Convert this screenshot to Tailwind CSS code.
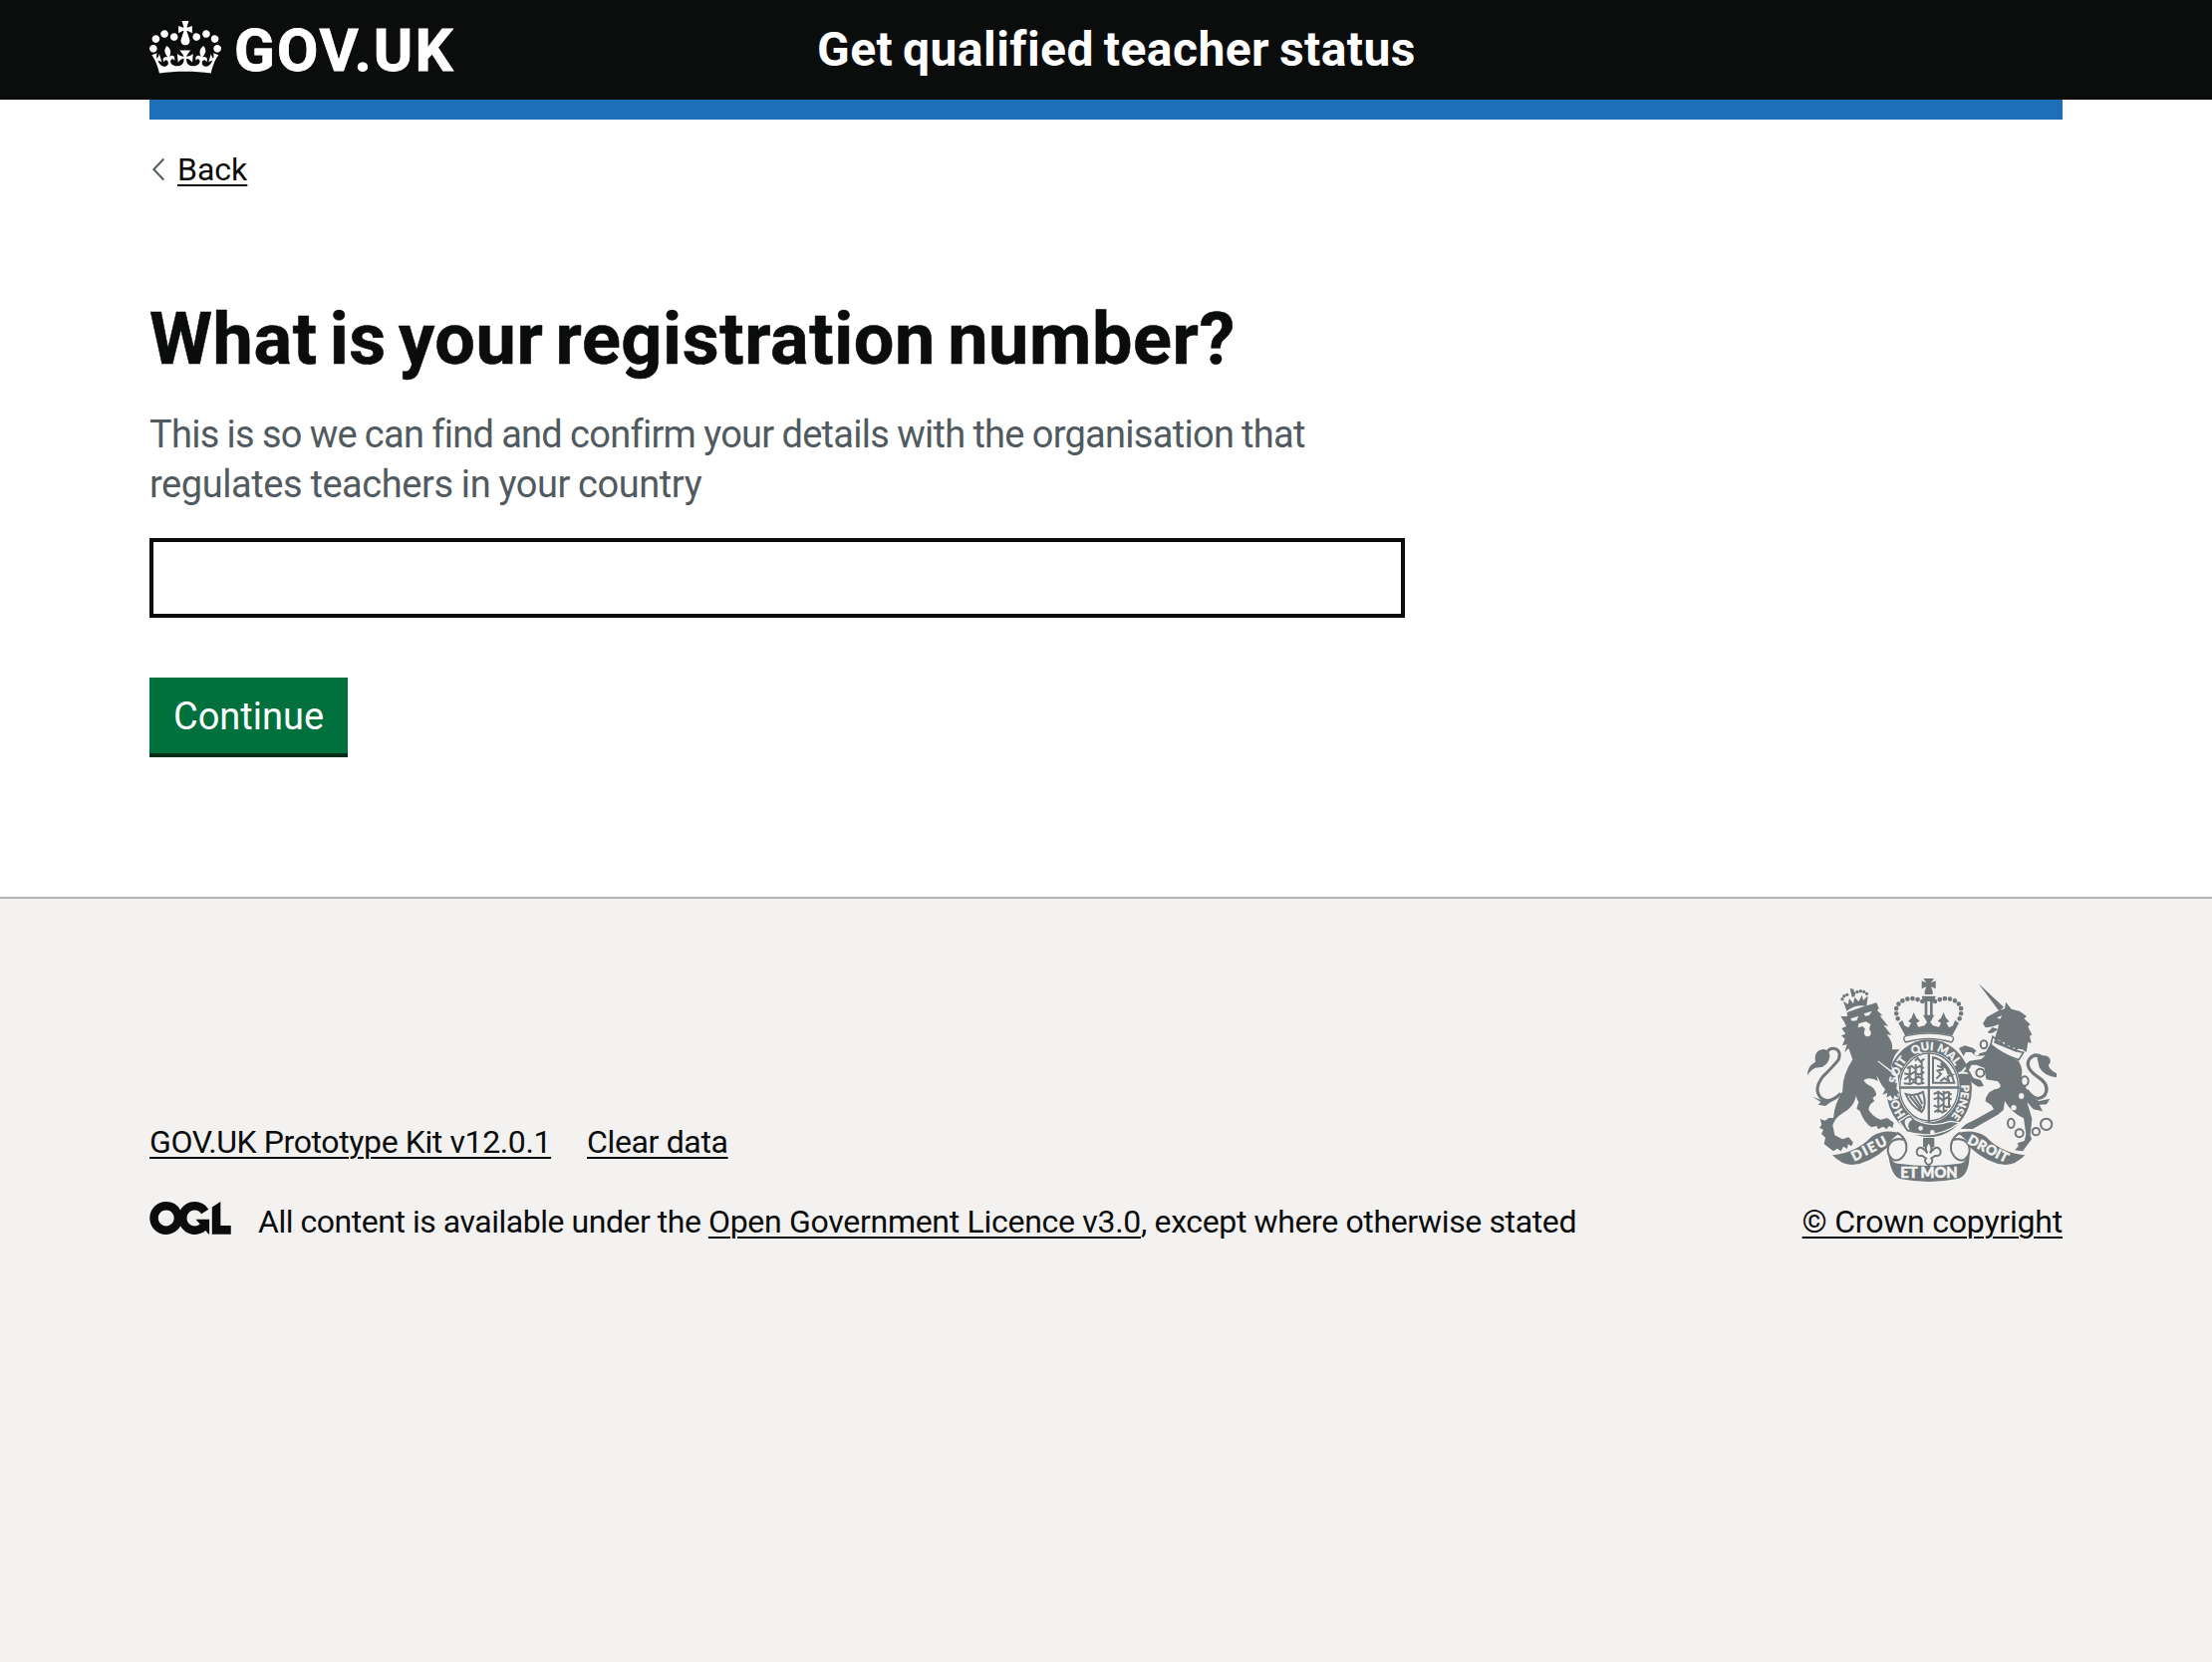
<!DOCTYPE html>
<html lang="en">
<head>
<meta charset="utf-8">
<title>What is your registration number? - Get qualified teacher status</title>
<script src="https://cdn.jsdelivr.net/npm/@tailwindcss/browser@4"></script>
</head>
<body class="flex min-h-screen flex-col overflow-x-hidden bg-white font-['Roboto',sans-serif] text-[#0b0c0c] antialiased">
<header class="bg-[#0b0c0c] px-[150px] text-white">
  <div class="flex h-[100px] items-center whitespace-nowrap font-bold">
    <a href="#" class="flex w-[670px] items-center gap-[13px]">
      <svg class="mb-[5px] h-[53px] w-[72px]" viewBox="0 0 132 97" fill="currentColor" aria-hidden="true"><path fill-rule="evenodd" d="M25 30.2c3.5 1.5 7.7-.2 9.1-3.7 1.5-3.6-.2-7.8-3.9-9.2-3.6-1.4-7.6.3-9.1 3.9-1.4 3.5.3 7.5 3.9 9zM9 39.5c3.6 1.5 7.8-.2 9.2-3.7 1.5-3.6-.2-7.8-3.9-9.1-3.6-1.5-7.6.2-9.1 3.8-1.4 3.5.3 7.5 3.8 9zM4.4 57.2c3.5 1.5 7.7-.2 9.1-3.8 1.5-3.6-.2-7.7-3.9-9.1-3.5-1.5-7.6.3-9.1 3.8-1.4 3.5.3 7.6 3.9 9.1zm38.3-21.4c3.5 1.5 7.7-.2 9.1-3.8 1.5-3.6-.2-7.7-3.9-9.1-3.6-1.5-7.6.3-9.1 3.8-1.3 3.6.4 7.7 3.9 9.1zm64.4-5.6c-3.6 1.5-7.8-.2-9.1-3.7-1.5-3.6.2-7.8 3.8-9.2 3.6-1.4 7.7.3 9.2 3.9 1.3 3.5-.4 7.5-3.9 9zm15.9 9.3c-3.6 1.5-7.7-.2-9.1-3.7-1.5-3.6.2-7.8 3.7-9.1 3.6-1.5 7.7.2 9.2 3.8 1.5 3.5-.3 7.5-3.8 9zm4.7 17.7c-3.6 1.5-7.8-.2-9.2-3.8-1.5-3.6.2-7.7 3.9-9.1 3.6-1.5 7.7.3 9.2 3.8 1.3 3.5-.4 7.6-3.9 9.1zM89.3 35.8c-3.6 1.5-7.8-.2-9.2-3.8-1.4-3.6.2-7.7 3.9-9.1 3.6-1.5 7.7.3 9.2 3.8 1.4 3.6-.3 7.7-3.9 9.1zM69.7 17.7l8.9 4.7V9.3l-8.9 2.8c-.2-.3-.5-.6-.9-.9L72.4 0H59.6l3.5 11.2c-.3.3-.6.5-.9.9l-8.8-2.8v13.1l8.8-4.7c.3.3.6.7.9.9l-5 15.4v.1c-.2.8-.4 1.6-.4 2.4 0 4.1 3.1 7.5 7 8.1h.2c.3 0 .7.1 1 .1.4 0 .7 0 1-.1h.2c4-.6 7.1-4.1 7.1-8.1 0-.8-.1-1.7-.4-2.4V34l-5.1-15.4c.4-.2.7-.6 1-.9zM66 92.8c16.9 0 32.8 1.1 47.1 3.2 4-16.9 8.9-26.7 14-33.5l-9.6-3.4c1 4.9 1.1 7.2 0 10.2-1.5-1.4-3-4.3-4.2-8.7L108.6 76c2.8-2 5-3.2 7.5-3.3-4.4 9.4-10 11.9-13.6 11.2-4.3-.8-6.3-4.6-5.6-7.9 1-4.7 5.7-5.9 8-.5 4.3-8.7-3-11.4-7.6-8.8 7.1-7.2 7.9-13.5 2.1-21.1-8 6.1-8.1 12.3-4.5 20.8-4.7-5.4-12.1-2.5-9.5 6.2 3.4-5.2 7.9-2 7.2 3.1-.6 4.3-6.4 7.8-13.5 7.2-10.3-.9-10.9-8-11.2-13.8 2.5-.5 7.1 1.8 11 7.3L80.2 60c-4.1 4.4-8 5.3-12.3 5.4 1.4-4.4 8-11.6 8-11.6H55.5s6.4 7.2 7.9 11.6c-4.2-.1-8-1-12.3-5.4l1.4 16.4c3.9-5.5 8.5-7.7 10.9-7.3-.3 5.8-.9 12.8-11.1 13.8-7.2.6-12.9-2.9-13.5-7.2-.7-5 3.8-8.3 7.1-3.1 2.7-8.7-4.6-11.6-9.4-6.2 3.7-8.5 3.6-14.7-4.6-20.8-5.8 7.6-5 13.9 2.2 21.1-4.7-2.6-11.9.1-7.7 8.8 2.3-5.5 7.1-4.2 8.1.5.7 3.3-1.3 7.1-5.7 7.9-3.5.7-9-1.8-13.5-11.2 2.5.1 4.7 1.3 7.5 3.3l-4.7-15.4c-1.2 4.4-2.7 7.2-4.3 8.7-1.1-3-.9-5.3 0-10.2l-9.5 3.4c5 6.9 9.9 16.7 14 33.5 14.8-2.1 30.8-3.2 47.7-3.2z"/></svg>
      <span class="mt-px text-[60px] leading-[100px] tracking-[2px] [-webkit-text-stroke:0.8px_white]">GOV.UK</span>
    </a>
    <a href="#" class="text-[48px] leading-[100px] tracking-[0.45px] [word-spacing:-2.6px]">Get qualified teacher status</a>
  </div>
</header>
<div class="mx-[150px] h-5 bg-[#1d70b8]"></div>
<main class="h-[780px] px-[150px] pt-[30px]">
  <a href="#" class="flex h-10 items-center gap-[13px] text-[32px] leading-10">
    <svg class="ml-[3px] h-6 w-3" viewBox="0 0 12 24" fill="none" stroke="#505a5f" stroke-width="2" aria-hidden="true"><path d="M11.3 1.5 1.3 12l10 10.5"/></svg>
    <span class="underline decoration-2 underline-offset-[4px]">Back</span>
  </a>
  <h1 class="mt-[113px] h-[76px] whitespace-nowrap text-[72px] font-bold leading-[76px] tracking-[0.6px] [word-spacing:-6.4px] [-webkit-text-stroke:0.6px_#0b0c0c]">What is your registration number?</h1>
  <p class="mt-8 whitespace-nowrap text-[38px] leading-[50px] text-[#505a5f]"><span class="tracking-[-0.71px] [word-spacing:-0.8px]">This is so we can find and confirm your details with the organisation that</span><br><span class="tracking-[-0.43px] [word-spacing:-0.8px]">regulates teachers in your country</span></p>
  <input type="text" aria-label="Registration number" class="mt-[29px] block h-20 w-[1260px] border-4 border-[#0b0c0c] bg-white px-2 text-[38px]">
  <button class="mt-[60px] block h-20 w-[199px] border-b-4 border-[#002d18] bg-[#00703c] pt-[2px] text-center text-[38px] leading-[74px] text-white">Continue</button>
</main>
<footer class="flex grow items-start justify-between whitespace-nowrap border-t-2 border-[#b1b4b6] bg-[#f3f2f1] px-[150px] text-[32px] leading-10">
  <div class="pt-[224px]">
    <div class="flex gap-[36px]">
      <a href="#" class="tracking-[-0.39px] underline decoration-2 underline-offset-[4px]">GOV.UK Prototype Kit v12.0.1</a>
      <a href="#" class="tracking-[-0.36px] underline decoration-2 underline-offset-[4px]">Clear data</a>
    </div>
    <div class="mt-10 flex items-start gap-[27px]">
      <svg class="h-[33px] w-[82px]" viewBox="0 0 483.2 195.7" fill="currentColor" aria-label="Open Government Licence"><path d="M421.5 142.8V.1l-50.7 32.3v161.1h112.4v-50.7zm-122.3-9.6A47.12 47.12 0 0 1 221 97.8c0-26 21.1-47.1 47.1-47.1 16.7 0 31.4 8.7 39.7 21.8l42.7-27.2A97.63 97.63 0 0 0 268.1 0c-36.5 0-68.3 20.1-85.1 49.7A98 98 0 0 0 97.8 0C43.9 0 0 43.9 0 97.8s43.9 97.8 97.8 97.8c36.5 0 68.3-20.1 85.1-49.7a97.76 97.76 0 0 0 149.6 25.4l19.4 22.2h3v-87.8h-80l24.3 27.5zM97.8 145c-26 0-47.1-21.1-47.1-47.1s21.1-47.1 47.1-47.1 47.1 21.1 47.1 47.1S123.8 145 97.8 145"/></svg>
      <p><span class="tracking-[-0.47px]">All content is available under the </span><a href="#" class="tracking-[-0.29px] underline decoration-2 underline-offset-[4px]">Open Government Licence v3.0</a><span class="tracking-[-0.37px]">, except where otherwise stated</span></p>
    </div>
  </div>
  <div class="flex flex-col items-end pt-[80px]">
    <svg class="mr-[6px] h-[204px] w-[250px]" viewBox="42 36 750 612" fill="#6f777b" aria-label="Royal coat of arms">
      <!-- garter and shield -->
      <ellipse cx="408" cy="367" rx="129" ry="147"/>
      <ellipse cx="408" cy="363" rx="92" ry="106" fill="#f3f2f1"/>
      <ellipse cx="408" cy="363" rx="88" ry="102" fill="none" stroke="#6f777b" stroke-width="4"/>
      <path d="M404 260h7v210h-7ZM316 361h184v7H316Z"/>
      <g fill="none" stroke="#6f777b" stroke-width="6">
        <path d="m342 306 14-6 10 8 14-8 12 6M334 322l16 4 14-8 12 8 18-8M334 340l12-8 14 10 16-10 16 8M332 352l20 2 10-6 14 6 18-4M366 284l8-8 8 10 12-8M350 300v50M368 294v56M386 284v66"/>
        <path d="M420 274Q465 282 484 350H420ZM430 338l14-14-10-10 16-4-4-14 14 10 6 16 12 4-14 6 4 14-14-10-12 10M432 298l14 6M446 286l8 14"/>
        <path d="m422 384 14-6 12 8 14-8 14 8M422 400l16-6 10 8 16-8 12 6M422 418l14 6 12-8 14 8 12-6M424 438l12-6 12 8 14-8M436 374v66M452 374v66M468 376v50"/>
        <path d="M338 384Q364 392 390 378 402 420 386 438 352 420 338 384ZM350 390l34 42M362 390l25 36M374 386l14 28"/>
      </g>
      <path d="M318 466 346 448Q405 492 470 466L500 470Q430 524 340 498Z" stroke="#f3f2f1" stroke-width="4"/>
      <path d="M352 452q-24 4-18 24t22 20q-10-10-8-20t14-14Z" fill="#f3f2f1" stroke="#6f777b" stroke-width="4"/>
      <g fill="#f3f2f1"><circle cx="383" cy="487" r="7"/><circle cx="418" cy="499" r="7"/></g>
      <!-- lion -->
      <g>
        <path d="M256 338 294 296 314 330 318 368 316 398 290 404 268 390Z" fill="#f3f2f1"/>
        <path d="M142 150 162 150 161 138Q205 122 250 109L257 126 252 132 268 148 260 148 285 180 271 176 295 207 281 204Q302 232 296 250L320 250Q302 264 294 300 300 320 312 345L310 368 318 380 313 384 315 396 304 388 300 402 292 388 280 395 283 380 268 386 276 370 266 358 256 338 250 328 254 344Q228 330 211 342 217 354 236 362 250 375 249 388L238 396 244 405Q228 414 226 430 234 450 262 461L282 456 302 470 298 486 288 480 280 490 270 482 255 490 250 480 235 484Q212 470 200 435L190 428 196 408Q185 392 190 376 188 420 150 440 124 456 118 478L124 508 148 520 166 514 180 530 174 541 164 535 162 549 150 542 143 556 132 548 120 556 104 544 92 534 96 515 84 504 90 491 78 486 85 476 80 459 95 464 106 456 120 456Q124 412 148 375 146 330 178 280L166 246 154 258 161 235 147 238 155 218 144 208 157 203 145 186 159 180 152 166Z"/>
        <path d="M142 382Q112 415 84 397 58 372 88 332 120 300 136 280 145 252 122 247 106 246 101 260" fill="none" stroke="#6f777b" stroke-width="9"/>
        <path d="M42 328Q42 298 66 288 60 252 90 249 110 252 109 272 103 302 76 304 55 305 42 328ZM57 392 84 402 112 398 144 380 132 396 112 408 96 420 74 416 82 408Z"/>
        <path d="M147 98Q150 84 172 84M182 81Q208 66 222 84" fill="none" stroke="#6f777b" stroke-width="10" stroke-linecap="round" stroke-dasharray="0 10.5"/>
        <path d="m170 66 11 2 4 22-9 2Z"/>
        <path d="m150 104 14 10 4-18 12 16 4-20 12 14 10-20 4 16 14-14-4 32Q190 112 160 134Z"/>
        <g fill="#f3f2f1"><path d="m172 157 24-8-6 14-14 1ZM212 142l24-8-8 13-12 2ZM196 172l22-6 14 8-4 14q8 10 4 18-9 9-18 0-4-10 2-18l-8-8-14 4ZM256 284l40 30-2 5-42-34Z"/></g>
      </g>
      <!-- unicorn -->
      <g transform="translate(390)">
        <path d="m166 50 77 72-14 12ZM180 172 192 152 222 136 246 127 249 107 266 128 290 134 312 150 304 157 323 174 316 181 328 206 321 209 326 231 316 228 311 258 299 250Q265 246 247 230L216 216 224 190Q208 206 194 198L212 181 188 184Z"/>
        <path d="M203 232Q245 265 287 284 302 305 296 332L314 375 330 396 350 405 382 398 372 415 350 416 360 436 332 430 313 408 328 458 323 508 327 520 312 540 300 556 276 553 288 540 284 532 305 525 310 505 303 457Q268 442 246 405L242 432 225 446 150 489 113 489 130 474 155 462 213 430 206 418 188 406Q188 382 215 370 245 366 225 346L190 340 184 305 160 296 146 296 138 312 152 336 174 342 183 360 166 362 150 352 126 322 122 300 140 284 175 279 188 268 160 270 145 258 128 258 122 270 108 246 126 238 150 245 170 262 190 256Z"/>
        <path d="m210 211q40 38 92 48l-14 22q-50-16-84-46Z" fill="#f3f2f1" stroke="#6f777b" stroke-width="5"/>
        <path d="m214 224 6-10 8 16 8-12 6 20 10-14 6 20 12-12 2 18 14-10-4 18-68-28Z"/>
        <path d="M312 372Q340 412 366 388 384 358 348 334 304 305 320 279 338 257 362 276" fill="none" stroke="#6f777b" stroke-width="10"/>
        <path d="M343 272Q360 264 378 272 390 286 377 298 384 314 402 322L402 334Q366 332 350 304Z"/>
        <g fill="#f3f2f1"><ellipse cx="296" cy="390" rx="8" ry="9"/><circle cx="273" cy="425" r="8"/><circle cx="162" cy="262" r="7"/><path d="m222 154 16-6-6 10ZM206 182l22-8-3 14Z"/>
        <g stroke="#6f777b" stroke-width="6"><ellipse cx="183" cy="235" rx="10" ry="12"/><circle cx="172" cy="320" r="12"/><ellipse cx="306" cy="345" rx="11" ry="14"/><ellipse cx="265" cy="472" rx="10" ry="14"/><circle cx="290" cy="502" r="12"/><circle cx="340" cy="497" r="11"/><circle cx="371" cy="475" r="17"/></g></g>
      </g>
      <!-- crown -->
      <g>
        <path d="m391 36 32 0-9 13 14-6 0 24-14-6 5 13 0 10-24 0 0-10 5-13-14 6 0-24 14 6Z"/>
        <path d="M386 89h42l-4 16h-34Zm9 16h8v42h-8Zm16 0h8v42h-8Z"/>
        <g fill="none" stroke="#6f777b" stroke-width="14" stroke-linecap="round" stroke-dasharray="0 15.5"><path d="M314 157Q298 118 332 101 360 90 390 106"/><path d="M500 157Q516 118 482 101 454 90 424 106"/></g>
        <path d="M316 170 328 162 334 178 346 184 354 170 345 165 355 155 362 138 370 155 380 164 370 170 376 182 394 178 402 168 390 146 424 146 412 168 420 178 438 182 444 170 434 164 444 155 452 138 459 155 469 165 460 170 468 184 480 178 486 162 498 170 478 208Q408 190 336 208Z"/>
        <path d="M338 228Q324 210 344 208 408 194 470 208 490 212 476 228 408 206 338 228Z" fill="#f3f2f1" stroke="#6f777b" stroke-width="4"/>
      </g>
      <path id="motto" d="M408 482A97 115 0 0 1 408 252 97 115 0 0 1 408 482" fill="none"/>
      <g class="font-['Lato',sans-serif] font-black" fill="#f3f2f1" stroke="#f3f2f1" stroke-width="1" font-size="34" text-anchor="middle">
        <text><textPath href="#motto" startOffset="108">HO</textPath></text>
        <text><textPath href="#motto" startOffset="220">SOIT</textPath></text>
        <text><textPath href="#motto" startOffset="314">QUI</textPath></text>
        <text><textPath href="#motto" startOffset="392">MAL</textPath></text>
        <text><textPath href="#motto" startOffset="454">Y</textPath></text>
        <text font-size="33"><textPath href="#motto" startOffset="540">PENSE</textPath></text>
      </g>
      <!-- ribbon -->
      <g id="scroll">
        <path d="M117 568Q190 560 235 512 275 488 320 502 290 520 282 545 228 594 175 597 145 597 117 568Z"/>
        <path d="M312 500Q346 520 339 556 324 590 300 582 278 566 286 540 300 512 334 522" fill="none" stroke="#6f777b" stroke-width="6"/>
      </g>
      <use href="#scroll" transform="matrix(-1 0 0 1 814 0)"/>
      <path d="M284 555Q292 594 320 594 408 606 494 594 522 594 530 555 532 634 490 640 408 656 324 640 292 634 284 555Z"/>
      <path d="M390 516h34v28h-34Z"/>
      <path d="M407 528Q422 545 411 562 434 532 443 556 444 572 426 570L415 578Q424 588 407 598 390 588 399 578L388 570Q370 572 371 556 380 532 403 562 392 545 407 528Z" fill="#f3f2f1" stroke="#6f777b" stroke-width="6"/>
      <g class="font-['Lato',sans-serif] font-black" fill="#f3f2f1" stroke="#f3f2f1" stroke-width="1.5" text-anchor="middle">
        <text x="234" y="561" font-size="41" transform="rotate(-27 234 561)" textLength="114">DIEU</text>
        <text x="580" y="561" font-size="41" transform="rotate(27 580 561)" textLength="132">DROIT</text>
        <text x="408" y="636" font-size="44" textLength="172">ET MON</text>
      </g>
    </svg>
    <a href="#" class="mt-5 tracking-[-0.21px] underline decoration-2 underline-offset-[4px]">© Crown copyright</a>
  </div>
</footer>
</body>
</html>
